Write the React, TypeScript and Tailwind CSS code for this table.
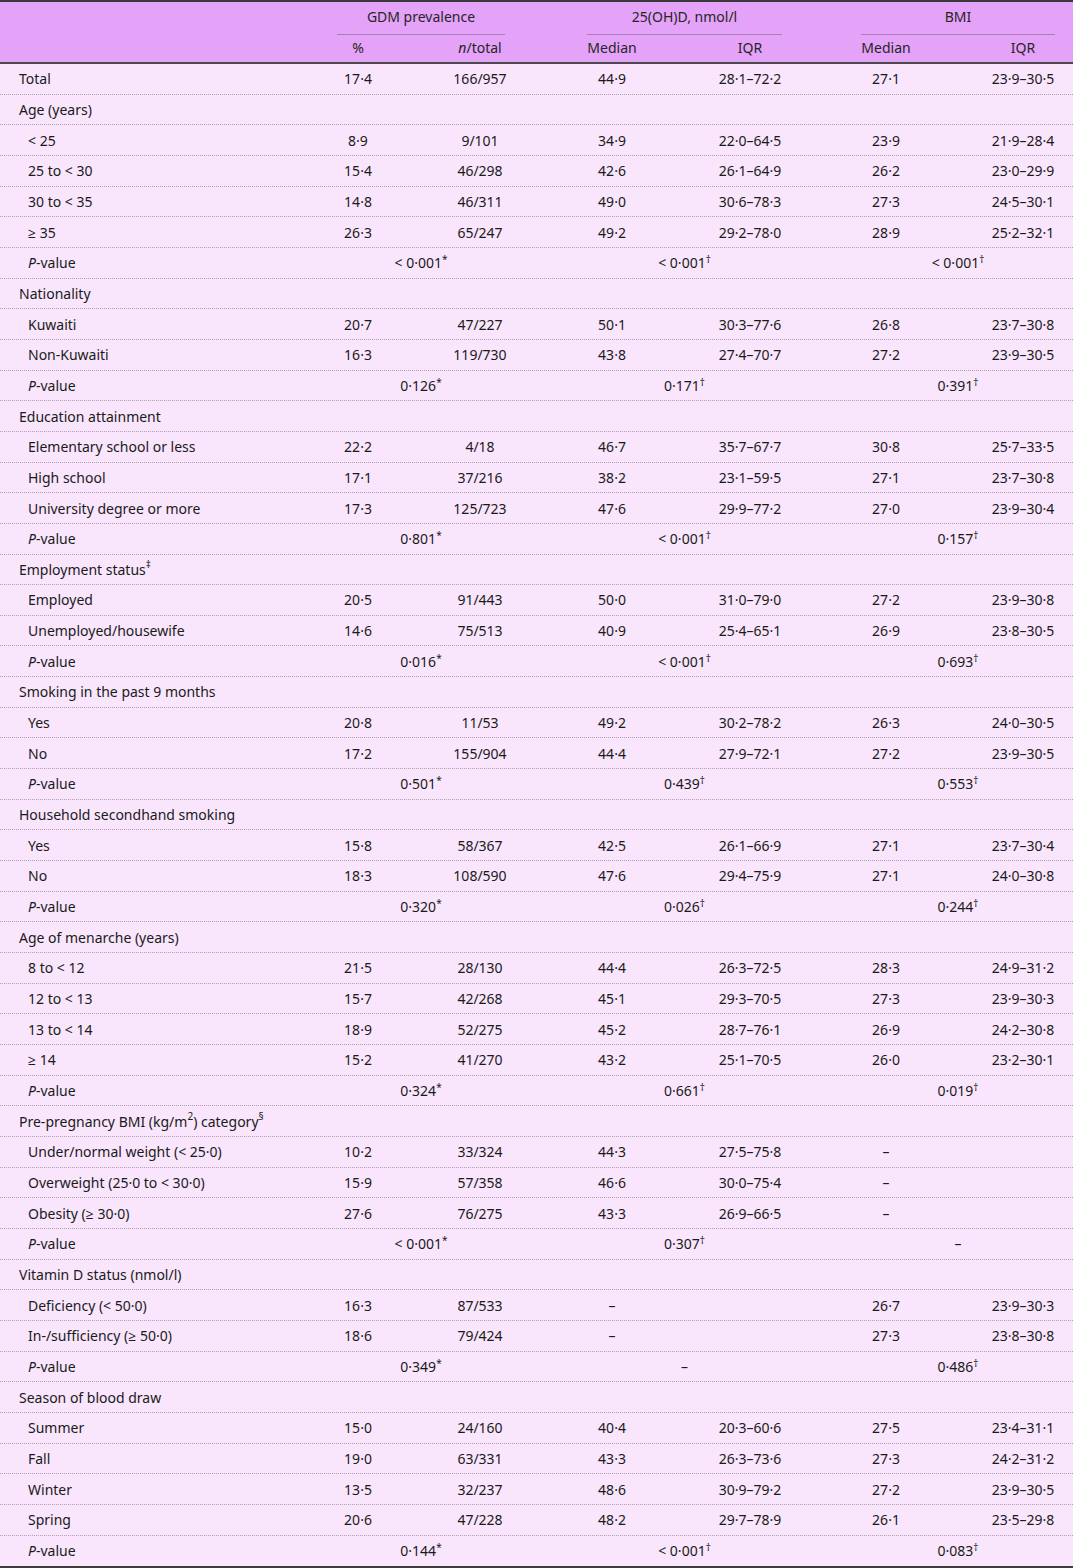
import React from "react";

type Row =
  | { kind: "group"; label: React.ReactNode }
  | { kind: "data"; label: React.ReactNode; cells: string[]; top?: boolean }
  | { kind: "p"; gdm: React.ReactNode; vit: React.ReactNode; bmi: React.ReactNode };

const star = <sup className="text-[10px]">*</sup>;
const dag = <sup className="text-[10px]">†</sup>;

const p = (g: string, v: string | null, b: string | null): Row => ({
  kind: "p",
  gdm: (
    <>
      {g}
      {star}
    </>
  ),
  vit: v ? (
    <>
      {v}
      {dag}
    </>
  ) : (
    "–"
  ),
  bmi: b ? (
    <>
      {b}
      {dag}
    </>
  ) : (
    "–"
  ),
});

const g = (label: React.ReactNode): Row => ({ kind: "group", label });
const d = (label: React.ReactNode, ...cells: string[]): Row => ({ kind: "data", label, cells });

const rows: Row[] = [
  { kind: "data", label: "Total", cells: ["17·4", "166/957", "44·9", "28·1–72·2", "27·1", "23·9–30·5"], top: true },
  g("Age (years)"),
  d("< 25", "8·9", "9/101", "34·9", "22·0–64·5", "23·9", "21·9–28·4"),
  d("25 to < 30", "15·4", "46/298", "42·6", "26·1–64·9", "26·2", "23·0–29·9"),
  d("30 to < 35", "14·8", "46/311", "49·0", "30·6–78·3", "27·3", "24·5–30·1"),
  d("≥ 35", "26·3", "65/247", "49·2", "29·2–78·0", "28·9", "25·2–32·1"),
  p("< 0·001", "< 0·001", "< 0·001"),
  g("Nationality"),
  d("Kuwaiti", "20·7", "47/227", "50·1", "30·3–77·6", "26·8", "23·7–30·8"),
  d("Non-Kuwaiti", "16·3", "119/730", "43·8", "27·4–70·7", "27·2", "23·9–30·5"),
  p("0·126", "0·171", "0·391"),
  g("Education attainment"),
  d("Elementary school or less", "22·2", "4/18", "46·7", "35·7–67·7", "30·8", "25·7–33·5"),
  d("High school", "17·1", "37/216", "38·2", "23·1–59·5", "27·1", "23·7–30·8"),
  d("University degree or more", "17·3", "125/723", "47·6", "29·9–77·2", "27·0", "23·9–30·4"),
  p("0·801", "< 0·001", "0·157"),
  g(
    <>
      Employment status<sup className="text-[10px]">‡</sup>
    </>
  ),
  d("Employed", "20·5", "91/443", "50·0", "31·0–79·0", "27·2", "23·9–30·8"),
  d("Unemployed/housewife", "14·6", "75/513", "40·9", "25·4–65·1", "26·9", "23·8–30·5"),
  p("0·016", "< 0·001", "0·693"),
  g("Smoking in the past 9 months"),
  d("Yes", "20·8", "11/53", "49·2", "30·2–78·2", "26·3", "24·0–30·5"),
  d("No", "17·2", "155/904", "44·4", "27·9–72·1", "27·2", "23·9–30·5"),
  p("0·501", "0·439", "0·553"),
  g("Household secondhand smoking"),
  d("Yes", "15·8", "58/367", "42·5", "26·1–66·9", "27·1", "23·7–30·4"),
  d("No", "18·3", "108/590", "47·6", "29·4–75·9", "27·1", "24·0–30·8"),
  p("0·320", "0·026", "0·244"),
  g("Age of menarche (years)"),
  d("8 to < 12", "21·5", "28/130", "44·4", "26·3–72·5", "28·3", "24·9–31·2"),
  d("12 to < 13", "15·7", "42/268", "45·1", "29·3–70·5", "27·3", "23·9–30·3"),
  d("13 to < 14", "18·9", "52/275", "45·2", "28·7–76·1", "26·9", "24·2–30·8"),
  d("≥ 14", "15·2", "41/270", "43·2", "25·1–70·5", "26·0", "23·2–30·1"),
  p("0·324", "0·661", "0·019"),
  g(
    <>
      Pre-pregnancy BMI (kg/m<sup className="text-[10px]">2</sup>) category
      <sup className="text-[10px]">§</sup>
    </>
  ),
  d("Under/normal weight (< 25·0)", "10·2", "33/324", "44·3", "27·5–75·8", "–", ""),
  d("Overweight (25·0 to < 30·0)", "15·9", "57/358", "46·6", "30·0–75·4", "–", ""),
  d("Obesity (≥ 30·0)", "27·6", "76/275", "43·3", "26·9–66·5", "–", ""),
  p("< 0·001", "0·307", null),
  g("Vitamin D status (nmol/l)"),
  d("Deficiency (< 50·0)", "16·3", "87/533", "–", "", "26·7", "23·9–30·3"),
  d("In-/sufficiency (≥ 50·0)", "18·6", "79/424", "–", "", "27·3", "23·8–30·8"),
  p("0·349", null, "0·486"),
  g("Season of blood draw"),
  d("Summer", "15·0", "24/160", "40·4", "20·3–60·6", "27·5", "23·4–31·1"),
  d("Fall", "19·0", "63/331", "43·3", "26·3–73·6", "27·3", "24·2–31·2"),
  d("Winter", "13·5", "32/237", "48·6", "30·9–79·2", "27·2", "23·9–30·5"),
  d("Spring", "20·6", "47/228", "48·2", "29·7–78·9", "26·1", "23·5–29·8"),
  p("0·144", "< 0·001", "0·083"),
];

const grid = "grid grid-cols-[300px_116px_128px_136px_140px_132px_121px]";

function PValue() {
  return (
    <>
      <i>P</i>-value
    </>
  );
}

export default function App() {
  return (
    <div
      className="w-[1073px] bg-white text-[14px] text-[#1a1a1a]"
      style={{ fontFamily: '"Noto Sans", "Open Sans", sans-serif' }}
    >
      <div className="border-t-2 border-b-2 border-t-[#3a3a3a] border-b-[#4a4a4a] bg-[#e4a2f8] text-[#262626]">
        <div className={`${grid} h-[33px] items-end`}>
          <div />
          <div className="col-span-2 pl-[37px] pr-[39px]">
            <div className="border-b border-[#a880b6] pb-[7px] text-center">GDM prevalence</div>
          </div>
          <div className="col-span-2 pl-[43px] pr-[38px]">
            <div className="border-b border-[#a880b6] pb-[7px] text-center">25(OH)D, nmol/l</div>
          </div>
          <div className="col-span-2 pl-[41px] pr-[18px]">
            <div className="border-b border-[#a880b6] pb-[7px] text-center">BMI</div>
          </div>
        </div>
        <div className={`${grid} h-[27px] items-center pb-[2px]`}>
          <div />
          <div className="text-center">%</div>
          <div className="text-center">
            <i>n</i>/total
          </div>
          <div className="text-center">Median</div>
          <div className="text-center">IQR</div>
          <div className="text-center">Median</div>
          <div className="pl-[21px] text-center">IQR</div>
        </div>
      </div>
      <div className="border-b-2 border-[#3d3d3d] bg-[#f9e6fc]">
        {rows.map((row, i) => {
          const last = i === rows.length - 1;
          const line = last ? "" : "border-b border-dotted border-[#aaa1ad]";
          if (row.kind === "group") {
            return (
              <div key={i} className={`flex h-[30.67px] items-center pl-[19px] ${line}`}>
                {row.label}
              </div>
            );
          }
          if (row.kind === "p") {
            return (
              <div key={i} className={`${grid} h-[30.67px] items-center ${line}`}>
                <div className="pl-[28px]">
                  <PValue />
                </div>
                <div className="col-span-2 pl-[37px] pr-[39px] text-center">{row.gdm}</div>
                <div className="col-span-2 pl-[43px] pr-[38px] text-center">{row.vit}</div>
                <div className="col-span-2 pl-[41px] pr-[18px] text-center">{row.bmi}</div>
              </div>
            );
          }
          return (
            <div key={i} className={`${grid} h-[30.67px] items-center ${line}`}>
              <div className={row.top ? "pl-[19px]" : "pl-[28px]"}>{row.label}</div>
              {row.cells.map((c, j) => (
                <div key={j} className={j === 5 ? "pl-[21px] text-center" : "text-center"}>
                  {c}
                </div>
              ))}
            </div>
          );
        })}
      </div>
    </div>
  );
}
